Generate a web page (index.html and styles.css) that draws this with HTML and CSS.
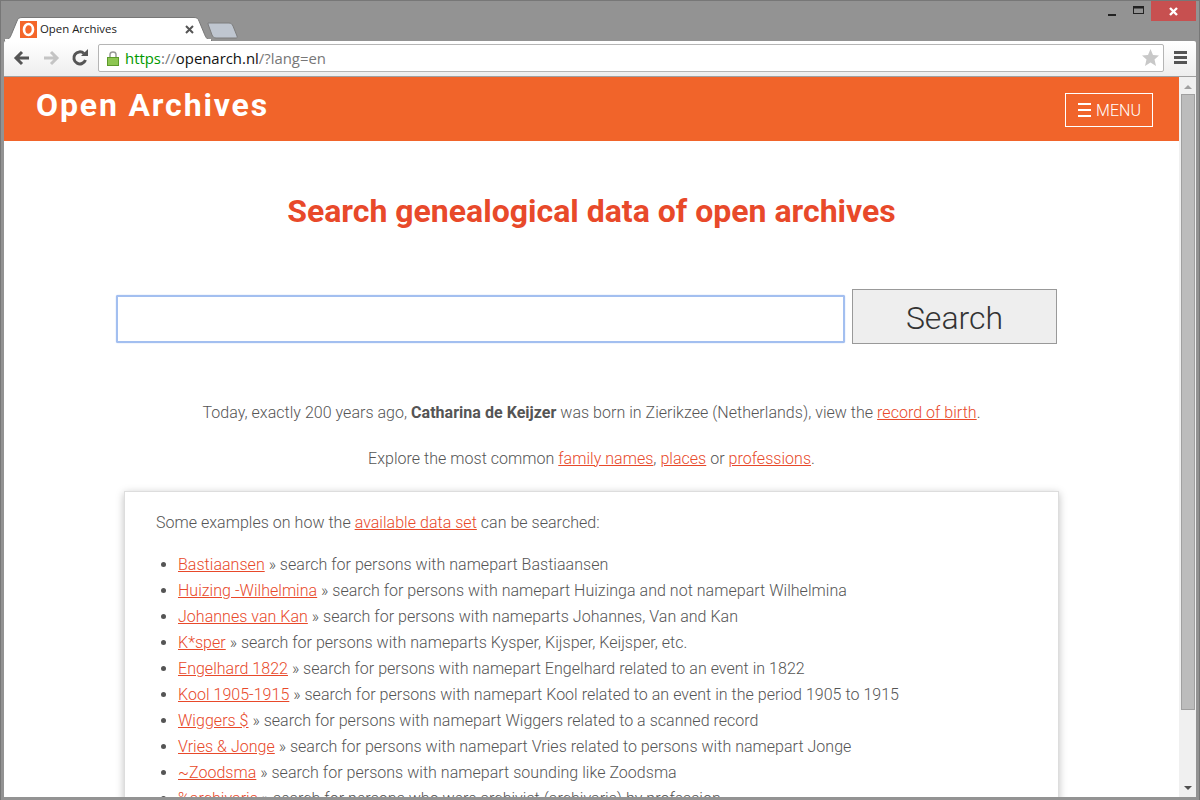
FILE: index.html
```html
<!DOCTYPE html>
<html lang="en">
<head>
<meta charset="utf-8">
<title>Open Archives</title>
<link rel="stylesheet" href="styles.css">
</head>
<body>
<div class="window">
  <div class="titlebar">
    <div class="tab">
      <svg class="tab-shape" width="208" height="24" viewBox="0 0 208 24"><path d="M0 23.500C5 23 6 21 8 16L13 4C14 1.500 15 .5 18 .5H190C193 .5 194 1.500 195 4L200 16C202 21 203 23 208 23.500V24H0Z" fill="#fff" stroke="#777"/><rect x="1" y="22" width="206" height="2" fill="#fff"/></svg>
      <svg class="favicon" width="17" height="17" viewBox="0 0 17 17"><rect width="17" height="17" fill="#f4662a"/><ellipse cx="8.500" cy="8.500" rx="4.500" ry="5.500" fill="none" stroke="#fff" stroke-width="2.600"/></svg>
      <span class="tab-title">Open Archives</span>
      <svg class="tab-close" width="9" height="9" viewBox="0 0 9 9"><path d="M1 1L8 8M8 1L1 8" stroke="#555" stroke-width="2"/></svg>
    </div>
    <svg class="new-tab" width="33" height="17" viewBox="0 0 33 17"><path d="M1 1H22C24 1 25 2 26 4L30 14C30.500 15.500 30 16 29 16H9C7 16 6 15 5 13L1 2Z" fill="#bfc6d0" stroke="#7d7d7d"/></svg>
    <div class="win-controls">
      <span class="win-btn win-min"><svg width="8" height="2" viewBox="0 0 8 2"><rect width="8" height="2" fill="#222"/></svg></span>
      <span class="win-btn win-max"><svg width="11" height="8" viewBox="0 0 11 8"><rect x=".5" y=".5" width="10" height="7" fill="none" stroke="#222"/><rect width="11" height="2.500" fill="#222"/></svg></span>
      <span class="win-btn win-close"><svg width="9" height="9" viewBox="0 0 9 9"><path d="M1 1L8 8M8 1L1 8" stroke="#fff" stroke-width="2.400"/></svg></span>
    </div>
  </div>
  <div class="toolbar">
    <svg class="nav" width="18" height="16" viewBox="0 0 18 16"><path d="M16 8H4M9 2L3 8L9 14" fill="none" stroke="#555" stroke-width="3"/></svg>
    <svg class="nav" width="18" height="16" viewBox="0 0 18 16"><path d="M2 8H14M9 2L15 8L9 14" fill="none" stroke="#c4c4c4" stroke-width="3"/></svg>
    <svg class="nav" width="18" height="18" viewBox="0 0 18 18"><path d="M14.500 11A6 6 0 1 1 13 4.500" fill="none" stroke="#555" stroke-width="3"/><path d="M10 7H17V0Z" fill="#555"/></svg>
    <div class="omnibox">
      <svg class="lock" width="12" height="16" viewBox="0 0 12 16"><path d="M3 8V4.500C3 1 9 1 9 4.500V8" fill="none" stroke="#999" stroke-width="1.500"/><rect x=".5" y="7.500" width="11" height="8" fill="#8dc652" stroke="#5d9a2c"/></svg>
      <span class="url"><span class="scheme">https</span><span class="url-dim">://</span><span class="host">openarch.nl</span><span class="url-dim">/?lang=en</span></span>
      <svg class="star" width="17" height="17" viewBox="0 0 17 17"><path d="M8.500 0L11 6L17 6.500L12.500 10.500L14 17L8.500 13.500L3 17L4.500 10.500L0 6.500L6 6Z" fill="#c8c8c8"/></svg>
    </div>
    <svg class="chrome-menu" width="13" height="13" viewBox="0 0 13 13"><path d="M0 0H13V3H0ZM0 5H13V8H0ZM0 10H13V13H0Z" fill="#555"/></svg>
  </div>
  <div class="viewport">
    <div class="page">
      <header class="site-header">
        <a class="brand">Open Archives</a>
        <a class="menu-btn"><span class="burger"><i></i><i></i><i></i></span>MENU</a>
      </header>
      <main class="content">
        <h1>Search genealogical data of open archives</h1>
        <form class="search">
          <input class="search-input" type="text">
          <button class="search-btn" type="button">Search</button>
        </form>
        <p class="today">Today, exactly 200 years ago, <b>Catharina de Keijzer</b> was born in Zierikzee (Netherlands), view the <a>record of birth</a>.</p>
        <p class="explore">Explore the most common <a>family names</a>, <a>places</a> or <a>professions</a>.</p>
        <section class="examples">
          <p>Some examples on how the <a>available data set</a> can be searched:</p>
          <ul>
            <li><a>Bastiaansen</a> » search for persons with namepart Bastiaansen</li>
            <li><a>Huizing -Wilhelmina</a> » search for persons with namepart Huizinga and not namepart Wilhelmina</li>
            <li><a>Johannes van Kan</a> » search for persons with nameparts Johannes, Van and Kan</li>
            <li><a>K*sper</a> » search for persons with nameparts Kysper, Kijsper, Keijsper, etc.</li>
            <li><a>Engelhard 1822</a> » search for persons with namepart Engelhard related to an event in 1822</li>
            <li><a>Kool 1905-1915</a> » search for persons with namepart Kool related to an event in the period 1905 to 1915</li>
            <li><a>Wiggers $</a> » search for persons with namepart Wiggers related to a scanned record</li>
            <li><a>Vries &amp; Jonge</a> » search for persons with namepart Vries related to persons with namepart Jonge</li>
            <li><a>~Zoodsma</a> » search for persons with namepart sounding like Zoodsma</li>
            <li><a>%archivaris</a> » search for persons who were archivist (archivaris) by profession</li>
          </ul>
        </section>
      </main>
    </div>
    <div class="scrollbar">
      <span class="arrow-up"></span>
      <span class="thumb"></span>
      <span class="arrow-down"></span>
    </div>
  </div>
</div>
</body>
</html>
```
FILE: styles.css
```css
* { box-sizing: border-box; }
html, body { margin: 0; height: 100%; overflow: hidden; }
body { font-family: Roboto, "Liberation Sans", sans-serif; }
.window {
  width: 1200px; height: 800px; display: flex; flex-direction: column;
  background: #939393; border: 1px solid #777; border-bottom: 0; padding: 0 3px 3px;
}
.titlebar { height: 40px; flex: none; display: flex; align-items: flex-end; position: relative; }
.tab { position: relative; width: 208px; height: 24px; margin-left: 0; display: flex; align-items: center; padding-left: 16px; }
.tab-shape { position: absolute; left: 0; top: 0; }
.favicon { position: relative; flex: none; }
.tab-title { position: relative; top: -1px; margin-left: 3px; font: 11.400px "Open Sans", sans-serif; color: #222; }
.tab-close { position: relative; margin-left: 68px; }
.new-tab { position: absolute; left: 203px; top: 21px; }
.win-controls { position: absolute; right: 0; top: 0; display: flex; align-items: flex-start; }
.win-btn { height: 20px; display: flex; align-items: center; justify-content: center; }
.win-min { width: 27px; align-items: flex-end; padding-bottom: 5px; }
.win-max { width: 26px; padding-bottom: 3px; }
.win-close { width: 45px; background: #c75050; }
.toolbar {
  height: 36px; flex: none; display: flex; align-items: center; padding: 0 9px 2px 9px;
  background: linear-gradient(#fff, #eee); border-bottom: 1px solid #a0a0a0; border-radius: 2px 2px 0 0;
}
.nav { margin-right: 11px; flex: none; }
.omnibox {
  flex: 1; height: 28px; margin-left: -2px; margin-right: 10px; padding: 0 4px 0 8px;
  display: flex; align-items: center; background: #fff;
  border: 1px solid #b5b5b5; border-radius: 2px;
}
.lock { flex: none; margin-right: 6px; }
.url { font: 14.900px "Open Sans", sans-serif; flex: 1; color: #777; }
.scheme { color: #090; }
.host { color: #111; }
.url-dim { color: #777; }
.chrome-menu { flex: none; margin-right: 0; }
.viewport { flex: 1; min-height: 0; display: flex; background: #fff; }
.page { flex: 1; min-width: 0; overflow: hidden; color: #555; font-size: 16px; font-weight: 300; letter-spacing: .03px; }
.site-header {
  height: 64px; background: #f1642a; display: flex; justify-content: space-between;
  padding: 8px 26px 0 32px; color: #fff;
}
.brand { font-size: 32px; line-height: 40px; font-weight: 700; letter-spacing: 1.850px; }
.menu-btn {
  height: 34px; width: 88px; margin-top: 8px; border: 1px solid #fff; padding-left: 1px;
  display: flex; align-items: center; justify-content: center; font-size: 16px; font-weight: 300;
}
.burger { display: flex; flex-direction: column; gap: 4px; margin-right: 5px; }
.burger i { display: block; width: 13px; height: 2px; background: #fff; }
.content { padding: 49px 120px 0; }
h1 { margin: 0; font-size: 32px; line-height: 42px; font-weight: 700; text-align: center; color: #e8492a; letter-spacing: 0; }
.search { display: flex; align-items: flex-end; margin: 57px 0 0 -8px; gap: 7px; }
.search-input {
  width: 729px; height: 48px; margin-bottom: 1px; border: 2px solid #a3bff0; border-radius: 2px; background: #fff; box-shadow: 0 0 1px #7da2e8;
}
.search-btn {
  width: 205px; height: 55px; border: 1px solid #999; background: #eee; color: #333;
  font: 300 32px Roboto, sans-serif; padding: 2px 0 0;
}
.today, .explore { margin: 0; text-align: center; line-height: 24px; }
.today { margin-top: 57px; }
.explore { margin-top: 22px; }
a { color: #e8492a; text-decoration: underline; }
.brand, .menu-btn { color: #fff; text-decoration: none; }
.today b { font-weight: 700; }
.examples {
  width: 935px; margin: 20px 0 0 0; border: 1px solid #ddd; padding: 19px 31px 0;
  box-shadow: 0 2px 8px rgba(0,0,0,.25);
}
.examples p { margin: 0; line-height: 24px; }
.examples ul { margin: 17px 0 0; padding: 0 0 0 22px; }
.examples li { line-height: 26px; }
.examples li::marker { color: #555; }
.scrollbar { width: 17px; flex: none; background: #f0f0f0; display: flex; flex-direction: column; align-items: center; }
.arrow-up, .arrow-down { width: 0; height: 0; border-left: 4px solid transparent; border-right: 4px solid transparent; }
.arrow-up { border-bottom: 4px solid #a0a0a0; margin: 8px 0 5px; }
.thumb { width: 14px; height: 616px; background: #bcbcbc; border: 1px solid #a0a0a0; }
.arrow-down { border-top: 4px solid #505050; margin-top: auto; margin-bottom: 7px; }
```
